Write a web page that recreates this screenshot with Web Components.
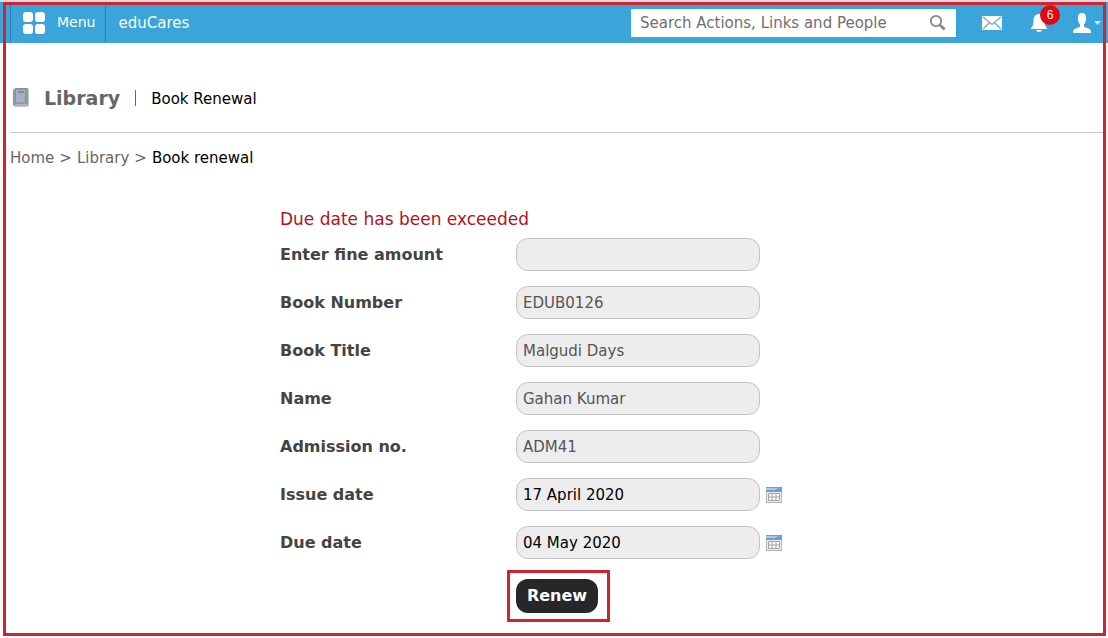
<!DOCTYPE html>
<html lang="en">
<head>
<meta charset="utf-8">
<title>eduCares - Book Renewal</title>
<style>
html { height: 100%; }
body { margin: 0; min-height: 100%; background: #fff; color: #000; font-family: "DejaVu Sans", Verdana, sans-serif; font-size: 15px; line-height: 20px; }
</style>
</head>
<body>
<library-app></library-app>
<script>
const define = (name, html, setup) => {
  const template = document.createElement('template');
  template.innerHTML = html;
  customElements.define(name, class extends HTMLElement {
    constructor() {
      super();
      this.attachShadow({ mode: 'open' }).append(template.content.cloneNode(true));
    }
    connectedCallback() { if (setup) setup(this, this.shadowRoot); }
  });
};

define('app-search', `
<style>
:host { display: block; width: 325px; }
form { display: flex; align-items: center; height: 28px; background: #fff; margin: 0; }
input { flex: 1; min-width: 0; border: 0; outline: 0; background: none; padding: 0 0 0 9px; font: inherit; font-size: 15px; color: #555; }
input::placeholder { color: #707070; opacity: 1; }
button { border: 0; background: none; padding: 0 9px; display: flex; }
</style>
<form role="search">
  <input type="text" aria-label="Search" placeholder="Search Actions, Links and People">
  <button type="button" aria-label="Search"><svg width="18" height="18" viewBox="0 0 18 18" fill="none" stroke="#858585"><circle cx="7" cy="7" r="5.2" stroke-width="1.800"/><path d="M11 11l4.600 4.600" stroke-width="2.800"/></svg></button>
</form>`);

define('app-header', `
<style>
:host { display: block; border-top: 2px solid #d9d9ea; background: #3aa4db; color: #fff; }
header { display: flex; align-items: center; height: 41px; padding: 0 7px 0 10px; }
.menu { align-self: stretch; display: flex; align-items: center; gap: 11px; padding: 0 10px 0 11px; border: 0; border-left: 1px solid #2682b4; border-right: 1px solid #2682b4; background: none; color: inherit; font: inherit; font-size: 14px; }
.menu span { padding-bottom: 2px; }
.brand { margin: 0 auto 0 12px; color: inherit; text-decoration: none; font-size: 15px; }
.icon { position: relative; display: flex; align-items: center; border: 0; padding: 0; background: none; color: inherit; }
.mail { margin-left: 26px; }
.bell { margin-left: 27px; }
.user { margin-left: 24px; gap: 3px; }
.badge { position: absolute; left: 11px; top: -8px; width: 20px; height: 20px; border-radius: 50%; background: #e30613; color: #fff; font-size: 12px; line-height: 20px; text-align: center; }
</style>
<header>
  <button class="menu" type="button">
    <svg width="24" height="24" viewBox="0 0 24 24" fill="#fff"><rect x="1" y="1" width="10" height="10" rx="3"/><rect x="13" y="1" width="10" height="10" rx="3"/><rect x="1" y="13" width="10" height="10" rx="3"/><rect x="13" y="13" width="10" height="10" rx="3"/></svg>
    <span>Menu</span>
  </button>
  <a class="brand" href="#">eduCares</a>
  <app-search></app-search>
  <button class="icon mail" type="button" aria-label="Messages"><svg width="20" height="14" viewBox="0 0 20 14"><rect width="20" height="14" rx="1" fill="#fff"/><path d="M1 1l9 7.500L19 1M1 13l6.500-6.300M19 13l-6.500-6.300" fill="none" stroke="#69a9cb" stroke-width="1.200"/></svg></button>
  <button class="icon bell" type="button" aria-label="Notifications"><svg width="20" height="19" viewBox="0 0 20 19" fill="#fff"><path d="M10 1c-4 0-5.500 3-5.500 6.500C4.500 12 3.500 13.500 1.500 16h17c-2-2.500-3-4-3-8.500C15.500 4 14 1 10 1z"/><path d="M7 17h6c-.5 1.300-1.500 1.800-3 1.800S7.500 18.300 7 17z"/></svg><span class="badge">6</span></button>
  <button class="icon user" type="button" aria-label="Account"><svg width="18" height="20" viewBox="0 0 18 20" fill="#fff"><path d="M9 0c3 0 4.200 2 4.200 5 0 3-1 5-2.200 6.500v2.300l5 1.900c1.300.5 2 1.500 2 4.300H0c0-2.800.7-3.800 2-4.300l5-1.900v-2.300C5.800 10 4.800 8 4.800 5 4.800 2 6 0 9 0z"/></svg><svg width="7" height="4" viewBox="0 0 7 4"><path d="M0 0h7L3.500 4z" fill="#c9ecfa"/></svg></button>
</header>`);

define('page-title', `
<style>
:host { display: flex; align-items: flex-start; height: 90px; box-sizing: border-box; padding: 43px 0 0 2px; margin: 0 4px 0 10px; border-bottom: 1px solid #c8c8c8; }
svg { margin-top: 1px; }
h1 { margin: 0 0 0 14px; font-size: 19px; line-height: 24px; color: #666; }
.bar { margin-left: 15px; width: 1px; height: 16px; margin-top: 4px; background: #666; }
h2 { margin: 1px 0 0 15px; font-size: 15px; line-height: 24px; font-weight: 400; color: #000; }
</style>
<svg width="18" height="20" viewBox="0 0 18 20"><path d="M3.500 1.500H15q1 0 1 1V18q0 1-1 1H3q-1.500 0-1.500-1.500V3z" fill="#9c9fab" stroke="#8b8d98"/><rect x="3.500" y="2" width="10" height="14" rx="1" fill="#aab0c3" stroke="#868b9c"/><path d="M6 5h6" stroke="#686d80" stroke-width="1.200"/><path d="M3 18h12" stroke="#c9cbd4"/></svg>
<h1><slot></slot></h1><span class="bar"></span><h2><slot name="sub"></slot></h2>`);

define('bread-crumbs', `
<style>
:host { display: block; padding: 15px 10px 0; font-size: 15px; color: #666; }
nav { display: flex; gap: 5px; }
a { color: inherit; text-decoration: none; }
[aria-current] { color: #000; }
</style>
<nav aria-label="Breadcrumb"><a href="#">Home</a><span>&gt;</span><a href="#">Library</a><span>&gt;</span><span aria-current="page"><slot></slot></span></nav>`);

define('form-row', `
<style>
:host { display: grid; grid-template-columns: 236px 244px 1fr; align-items: center; }
label { font-weight: 700; font-size: 16px; color: #444; }
input { box-sizing: border-box; width: 100%; height: 33px; margin: 0; padding: 0 6px; border: 1px solid #c3c3c3; border-radius: 12px; background: #ededed; color: #555; font: inherit; font-size: 15px; outline: 0; }
:host([date]) input { color: #000; }
button { display: none; justify-self: start; margin-left: 6px; border: 0; padding: 0; background: none; }
:host([date]) button { display: flex; }
</style>
<label for="field"></label><input id="field" type="text">
<button type="button" aria-label="Choose date"><svg width="16" height="16" viewBox="0 0 16 16"><rect x=".5" y=".5" width="15" height="15" fill="#eee" stroke="#b0b3b7"/><rect width="16" height="5" fill="#68a0d6"/><path d="M0 1h12L9 3H0z" fill="#a4caec"/><path d="M2.500 6.500h11v7h-11zM2.500 10h11M6 6.500v7M10 6.500v7" fill="#fff" stroke="#a3a3a3"/></svg></button>`,
(host, root) => {
  root.querySelector('label').textContent = host.getAttribute('label');
  const input = root.querySelector('input');
  input.value = host.getAttribute('value') || '';
  input.readOnly = host.hasAttribute('value');
});

define('renewal-form', `
<style>
:host { display: block; max-width: 548px; margin: 0 auto; padding-top: 41px; }
form { display: flex; flex-direction: column; gap: 15px; margin: 0; }
p { margin: 0 0 9px; font-size: 17px; line-height: 20px; color: #b5121b; }
.actions { margin: -4px 0 0 227px; align-self: flex-start; border: 3px solid #d2232f; padding: 6px 9px 6px 6px; }
.actions button { display: block; height: 34px; width: 82px; border: 0; border-radius: 12px; padding: 0; background: #252729; color: #fff; font: inherit; font-size: 16px; font-weight: 700; }
</style>
<p>Due date has been exceeded</p>
<form>
  <form-row label="Enter fine amount"></form-row>
  <form-row label="Book Number" value="EDUB0126"></form-row>
  <form-row label="Book Title" value="Malgudi Days"></form-row>
  <form-row label="Name" value="Gahan Kumar"></form-row>
  <form-row label="Admission no." value="ADM41"></form-row>
  <form-row label="Issue date" value="17 April 2020" date></form-row>
  <form-row label="Due date" value="04 May 2020" date></form-row>
  <div class="actions"><button type="button">Renew</button></div>
</form>`);

define('library-app', `
<style>
:host { display: block; position: relative; min-height: 100vh; }
.frame { position: absolute; inset: 2px 2px 2px 3px; border: 3px solid #d2232f; pointer-events: none; }
</style>
<app-header></app-header>
<main>
  <page-title>Library<span slot="sub">Book Renewal</span></page-title>
  <bread-crumbs>Book renewal</bread-crumbs>
  <renewal-form></renewal-form>
</main>
<div class="frame"></div>`);
</script>
</body>
</html>
